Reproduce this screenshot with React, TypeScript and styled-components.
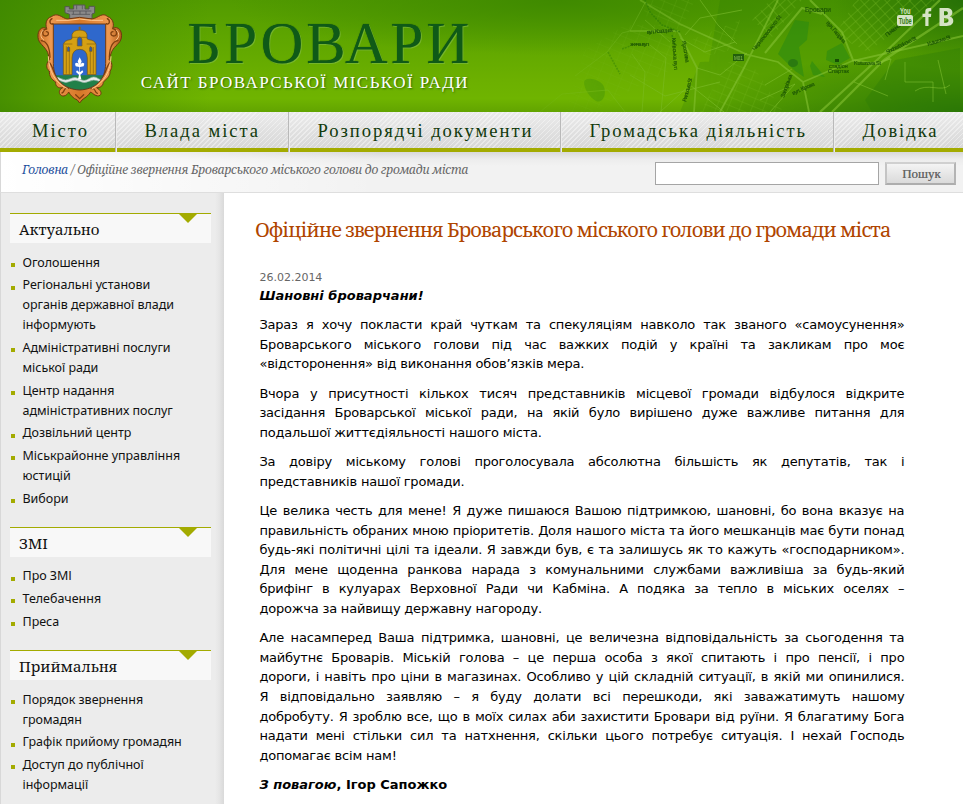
import React from 'react';
import styled, { createGlobalStyle, css } from 'styled-components';

const OLIVE = '#a3ab00';
const SERIF = '"Noto Serif", "DejaVu Serif Condensed", serif';
const TIMES = '"Liberation Serif", "Times New Roman", serif';
const SANS = '"DejaVu Sans", Verdana, sans-serif';

const GlobalStyle = createGlobalStyle`
  * { box-sizing: border-box; }
  body { margin: 0; background: #fff; overflow: hidden; }
  a { color: inherit; text-decoration: none; }
  ul, p, h1, h2 { margin: 0; padding: 0; }
`;

const Page = styled.div`
  width: 963px;
  height: 804px;
  overflow: hidden;
  display: flex;
  flex-direction: column;
`;

const Header = styled.header`
  position: relative;
  flex: 0 0 112px;
  display: flex;
  overflow: hidden;
  background:
    linear-gradient(90deg, rgba(58, 132, 0, 0.75) 0, rgba(58, 132, 0, 0.5) 50px, rgba(58, 132, 0, 0) 210px),
    radial-gradient(ellipse 130px 70px at 963px 0, #246c08 0, rgba(36, 108, 8, 0) 100%),
    radial-gradient(ellipse 260px 60px at 963px 112px, #2b7406 0, rgba(43, 116, 6, 0) 100%),
    radial-gradient(ellipse 330px 55px at 560px 0, #3f8a00 0, rgba(63, 138, 0, 0) 100%),
    linear-gradient(180deg, #529b00 0, #5fa600 35%, #6cb000 72%, #6fb400 88%, #62a400 100%);
`;

const MapArt = styled.svg`
  position: absolute;
  left: 530px;
  top: 0;
`;

const Crest = styled.svg`
  position: relative;
  flex: none;
  margin-left: 30px;
`;

const Brand = styled.div`
  position: relative;
  width: 340px;
  display: flex;
  flex-direction: column;
  align-items: flex-end;
  white-space: nowrap;
  font-family: ${TIMES};
`;

const BrandName = styled.div`
  height: 70px;
  padding-top: 11px;
  font-size: 59px;
  line-height: 65px;
  letter-spacing: 3px;
  margin-right: -2px;
  color: #0f5a17;
  text-shadow: 1px 1px 0 rgba(130, 190, 60, 0.7), 0 0 1px #0b4511;
`;

const BrandLine = styled.div`
  margin: 2px 1px 0 0;
  font-size: 17px;
  line-height: 22px;
  letter-spacing: 1.45px;
  color: #fff;
  text-shadow: 1px 1px 2px #2f6a00;
`;

const Social = styled.svg`
  position: relative;
  flex: none;
  margin: 6px 8px 0 auto;
`;

const Nav = styled.nav`
  flex: 0 0 40px;
  display: grid;
  grid-template-columns: 117px 173px 272px 273px 128px;
`;

const NavLink = styled.a<{ $first?: boolean; $last?: boolean }>`
  padding-left: ${p => (p.$first ? 32 : p.$last ? 27.5 : 27.5)}px;
  white-space: nowrap;
  font: 18.6px/38px ${TIMES};
  letter-spacing: 1.95px;
  color: #123a0c;
  background:
    ${p => (p.$last ? '' : css`linear-gradient(90deg, #b9b9b9 50%, #ececec 50%) right top / 2px 40px no-repeat,`)}
    linear-gradient(${OLIVE}, ${OLIVE}) left bottom / 100% 4px no-repeat,
    repeating-linear-gradient(135deg, rgba(255, 255, 255, 0.4) 0 1px, rgba(255, 255, 255, 0) 1px 3.5px),
    linear-gradient(#ebebeb, #d5d5d5);
`;

const Bar = styled.div`
  flex: 0 0 41px;
  display: flex;
  align-items: flex-start;
  border-left: 1px solid #d8d8d8;
  border-bottom: 1px solid #dedede;
  background:
    linear-gradient(90deg, #fff 0, rgba(255, 255, 255, 0) 380px),
    linear-gradient(#d9d9d9 0, #ececec 7px, #f2f2f2 14px, #f2f2f2 100%);
`;

const Crumbs = styled.div`
  flex: 1;
  padding: 8px 0 0 21px;
  font: italic 12px/20px ${SERIF};
  letter-spacing: -0.2px;
  color: #666;
  white-space: nowrap;
  a { color: #1d4f9c; }
`;

const SearchBox = styled.input`
  width: 224px;
  height: 23px;
  margin: 10px 6px 0 0;
  border: 1px solid #a5a5a5;
  border-radius: 0;
  background: #fff;
  outline: 0;
`;

const SearchButton = styled.button`
  width: 71px;
  height: 23px;
  margin: 10px 7px 0 0;
  padding: 0 0 0 2px;
  border: 2px solid;
  border-color: #d0d0d0 #b4b4b4 #adadad #c4c4c4;
  background: linear-gradient(#f4f4f4, #dadada);
  font: 13px/19px ${TIMES};
  color: #666;
  text-shadow: 0 0 0.6px #777;
`;

const Columns = styled.div`
  flex: 1;
  min-height: 0;
  display: flex;
`;

const Sidebar = styled.aside`
  flex: 0 0 224px;
  padding: 20px 13px 0 9px;
  border-left: 1px solid #d8d8d8;
  background: linear-gradient(90deg, #ececec 214px, #e6e6e6 218px, #d9d9d9 223px);
`;

const Block = styled.section`
  margin-bottom: 18px;
`;

const BlockHead = styled.h2`
  position: relative;
  height: 30px;
  padding-left: 9px;
  border-top: 1px solid ${OLIVE};
  background: #f8f8f8;
  font: 400 15px/31px ${SERIF};
  color: #111;
  &::after {
    content: '';
    position: absolute;
    top: 0;
    right: 14px;
    border: 9px solid transparent;
    border-top-color: ${OLIVE};
    border-bottom: 0;
  }
`;

const Links = styled.ul`
  margin-top: 9.8px;
  list-style: none;
  font: 12.5px/20px "Noto Sans", sans-serif;
  letter-spacing: -0.02px;
  color: #111;
`;

const LinkItem = styled.li`
  display: flex;
  gap: 7.5px;
  margin-bottom: 2.65px;
  white-space: pre-line;
  &::before {
    content: '';
    flex: none;
    width: 4px;
    height: 4px;
    margin: 10.4px 0 0 1px;
    background: ${OLIVE};
  }
`;

const Article = styled.main`
  flex: 1;
  padding: 20px 0 0 31px;
  background: #fff;
  font: 13px/19.53px ${SANS};
  color: #000;
`;

const Title = styled.h1`
  height: 54px;
  font: 400 20px/33px ${SERIF};
  letter-spacing: -0.98px;
  color: #b04500;
  white-space: nowrap;
`;

const Content = styled.div`
  width: 645px;
  margin-left: 4.4px;
`;

const PostDate = styled.div`
  height: 19px;
  font-size: 11px;
  line-height: 21px;
  color: #666;
`;

const Greeting = styled.p`
  font-weight: 700;
  font-style: italic;
`;

const Paragraph = styled.p`
  margin-top: 9.9px;
  letter-spacing: -0.2px;
`;

const Line = styled.span`
  display: block;
  text-align: justify;
  text-align-last: justify;
  white-space: nowrap;
  &:last-child { text-align-last: left; }
`;

const Signature = styled.p`
  margin-top: 9.5px;
  font-weight: 700;
`;

const menu = ['Місто', 'Влада міста', 'Розпорядчі документи', 'Громадська діяльність', 'Довідка'];

const blocks = [
  {
    title: 'Актуально',
    items: [
      'Оголошення',
      'Регіональні установи\nорганів державної влади\nінформують',
      'Адміністративні послуги\nміської ради',
      'Центр надання\nадміністративних послуг',
      'Дозвільний центр',
      'Міськрайонне управління\nюстицій',
      'Вибори',
    ],
  },
  { title: 'ЗМІ', items: ['Про ЗМІ', 'Телебачення', 'Преса'] },
  {
    title: 'Приймальня',
    items: ['Порядок звернення\nгромадян', 'Графік прийому громадян', 'Доступ до публічної\nінформації'],
  },
];

const paragraphs = [
  [
    'Зараз я хочу покласти край чуткам та спекуляціям навколо так званого «самоусунення»',
    'Броварського міського голови під час важких подій у країні та закликам про моє',
    '«відсторонення» від виконання обов’язків мера.',
  ],
  [
    'Вчора у присутності кількох тисяч представників місцевої громади відбулося відкрите',
    'засідання Броварської міської ради, на якій було вирішено дуже важливе питання для',
    'подальшої життєдіяльності нашого міста.',
  ],
  ['За довіру міському голові проголосувала абсолютна більшість як депутатів, так і', 'представників нашої громади.'],
  [
    'Це велика честь для мене! Я дуже пишаюся Вашою підтримкою, шановні, бо вона вказує на',
    'правильність обраних мною пріоритетів. Доля нашого міста та його мешканців має бути понад',
    'будь-які політичні цілі та ідеали. Я завжди був, є та залишусь як то кажуть «господарником».',
    'Для мене щоденна ранкова нарада з комунальними службами важливіша за будь-який',
    'брифінг в кулуарах Верховної Ради чи Кабміна. А подяка за тепло в міських оселях –',
    'дорожча за найвищу державну нагороду.',
  ],
  [
    'Але насамперед Ваша підтримка, шановні, це величезна відповідальність за сьогодення та',
    'майбутнє Броварів. Міській голова – це перша особа з якої спитають і про пенсії, і про',
    'дороги, і навіть про ціни в магазинах. Особливо у цій складній ситуації, в якій ми опинилися.',
    'Я відповідально заявляю – я буду долати всі перешкоди, які заважатимуть нашому',
    'добробуту. Я зроблю все, що в моїх силах аби захистити Бровари від руїни. Я благатиму Бога',
    'надати мені стільки сил та натхнення, скільки цього потребує ситуація. І нехай Господь',
    'допомагає всім нам!',
  ],
];

const CityMap = () => (
  <MapArt width="433" height="112" viewBox="530 0 433 112" fill="none">
    <defs>
      <linearGradient id="fade" x1="560" x2="720" y1="0" y2="0" gradientUnits="userSpaceOnUse">
        <stop offset="0" stopColor="#fff" stopOpacity="0.3" />
        <stop offset="1" stopColor="#fff" />
      </linearGradient>
      <mask id="m"><rect x="530" width="433" height="112" fill="url(#fade)" /></mask>
      <pattern id="grid" width="9" height="7" patternUnits="userSpaceOnUse" patternTransform="rotate(-42)">
        <path d="M0 0H9M0 0V7" stroke="#82c22a" strokeWidth="0.8" />
      </pattern>
      <pattern id="grid2" width="11" height="8" patternUnits="userSpaceOnUse" patternTransform="rotate(22)">
        <path d="M0 0H11M0 0V8" stroke="#82c22a" strokeWidth="0.7" />
      </pattern>
    </defs>
    <g mask="url(#m)">
      <path d="M720 0H963V112H700zM700 62 740 60 724 112H680z" fill="#2f7f05" opacity=".28" />
      <path d="M835 35 856 0h80l-68 52zM752 20l18-20h32l-30 37z" fill="url(#grid)" opacity=".75" />
      <path d="M700 112l28-50 25 4 30 46zM585 50l40-25 50 0 5 40-90 47h-25zM640 0h55l-15 30-32-10zM690 40l50-20-8 30-25 6z" fill="url(#grid2)" opacity=".5" />
      <path d="M778 54 795 20 809 22 807 40 799 47 804 77 795 71zM812 61l13 16-12-2-3-9zM827 51l15-8 8 15-12 7-12-5z" fill="#2c8b10" opacity=".6" />
      <path d="M895 60 960 48v64H872l-7-12z" fill="#2b7b08" opacity=".35" />
      <path d="M584 82c1-6 17-3 20 5s-2 17-8 14-12-12-12-19z" fill="#358908" opacity=".7" />
      <ellipse cx="793" cy="63" rx="5" ry="4" fill="#2b7a10" />
      <g stroke="#85c234" strokeOpacity=".6">
        <path strokeWidth="1.8" d="M720 112 745 66 778 0M745 54 778 62 803 82 809 112M803 82 852 61 963 36M748 55 680 24 640 0M630 31H678L697 68 694 112" />
        <path strokeWidth="2.3" d="M820 112 878 59 940 0M832 112 884 60 963 8" />
        <path strokeWidth="2" d="M810 0 842 32 853 60 878 64 890 58M765 53 802 8 822 14" />
        <path strokeWidth=".9" d="M575 76 607 52 622 33 630 31 646 1M632 54 645 72 642 112M650 45 666 58 661 112M680 38 705 52 735 42M685 35 700 18 742 10M697 68 720 75 747 53M630 75 665 96 720 82M660 112 690 85 724 112M700 0 718 25 737 44M540 112 562 94 608 90 625 112M645 20 670 42M765 85 792 69M760 100 795 84 770 112M868 65 891 59 885 80M854 82 888 96M905 62v20h28v20M938 60l8 34M915 91c13-9 26 2 35-6" />
      </g>
      <path stroke="#277805" strokeWidth="1.6" strokeDasharray="2 1" opacity=".7" d="M608 52 620 74M645 0 650 12 662 25 680 32M672 35 675 45M622 49l8-3" />
    </g>
    <rect x="733" y="54" width="11" height="7" fill="#225f0c" />
    <g fontFamily="Liberation Sans, sans-serif" fontSize="5.5" fill="#174f05" stroke="#174f05" strokeWidth=".15" opacity=".9">
      <text x="805" y="12" fontSize="7" textLength="26" lengthAdjust="spacingAndGlyphs">Бровари</text>
      <text x="734" y="60" fontSize="4.5" fill="#9acb60" stroke="none">M01</text>
      <text x="647" y="34" transform="rotate(-5 647 34)" textLength="26">вул. Козацька</text>
      <text x="630" y="46" textLength="19">зняча вул</text>
      <text x="755" y="51" transform="rotate(-52 755 51)" textLength="43">Черняховського St</text>
      <text x="826" y="23" transform="rotate(50 826 23)" textLength="27">вул. Гагаріна</text>
      <text x="829" y="68">стадіон</text>
      <text x="828" y="73">Спартак</text>
      <text x="854" y="65" textLength="27">Kutuzova St</text>
      <text x="793" y="95" transform="rotate(-24 793 95)" textLength="24">вул. Кірова</text>
      <text x="887" y="54" transform="rotate(-26 887 54)" textLength="33">Shcherbakova St</text>
      <text x="928" y="46" transform="rotate(-18 928 46)" textLength="24">Kutuzova St</text>
      <text x="887" y="37" transform="rotate(-38 887 37)" textLength="23">Пензенська</text>
      <text x="784" y="98" transform="rotate(-70 784 98)" textLength="24">Запорізька</text>
      <text x="682" y="41" transform="rotate(80 682 41)" textLength="22">Ярослава</text>
      <text x="672" y="38" transform="rotate(86 672 38)" textLength="32">Київська вул</text>
      <text x="686" y="102" transform="rotate(-75 686 102)" textLength="24">Рильська St</text>
    </g>
    <path d="M835 59v3h4v-3" fill="#174f05" />
  </MapArt>
);

const CityCrest = () => (
  <Crest width="100" height="112" viewBox="0 0 300 336">
    <defs>
      <linearGradient id="gold" x1="0" x2="1">
        <stop offset="0" stopColor="#c66b20" /><stop offset=".15" stopColor="#ee9950" />
        <stop offset=".5" stopColor="#d67828" /><stop offset=".85" stopColor="#ee9950" /><stop offset="1" stopColor="#b05a18" />
      </linearGradient>
      <clipPath id="shield"><path d="M70 72H227V190C227 240 195 268 149 270C103 268 70 240 70 190Z" /></clipPath>
    </defs>
    <path d="M105 20h13v7h13V15h34v12h12v-8h17v20l-8 3v14H119V43l-14-5z" fill="#8b8a8b" stroke="#55564f" strokeWidth="3" />
    <path d="M112 33h72M125 43h55M140 16v12M157 16v12M130 33v10M150 33v10M168 33v10" stroke="#55555a" strokeWidth="2.5" />
    <path d="M64 50C84 35 96 55 112 57L149 52 186 57C205 54 218 35 233 50C250 55 253 75 248 85C264 77 278 92 274 114C270 132 255 135 245 155L237 178C250 190 246 205 240 214C242 229 227 238 220 247C219 259 209 264 200 263C211 270 217 279 210 286C199 292 189 280 182 276C174 289 163 294 156 300L149 309L142 300C129 295 122 286 116 276C109 290 95 292 89 281C86 272 91 268 98 263C84 266 76 258 77 246C64 238 58 229 58 213C46 205 49 187 59 179L53 157C43 137 25 130 24 112C22 91 35 77 50 86C45 70 49 55 64 50Z" fill="url(#gold)" stroke="#713710" strokeWidth="3" />
    <g fill="none" strokeLinecap="round">
      <path d="M50 87c-15 2-15 20-3 21 10-1 11-13 2-13M248 86c15 3 15 21 3 22-10-1-11-13-2-13M66 56c-12 8-4 20 3 15M232 56c12 8 4 20-3 15M34 122c18 2 25 24 26 50M264 122c-18 2-25 24-26 50M57 187c14 11 11 39 31 49M241 187c-14 11-11 39-31 49M96 279c11-4 2-17 19-14M202 280c-11-4-2-17-19-14M137 284l12 12 12-12" stroke="#80400f" strokeWidth="4" />
      <path d="M80 61h34l35-4 35 4h34M39 91c-10 9-8 22 2 29M260 91c10 9 8 22-2 29M55 170c2 42 19 79 57 96M243 170c-2 42-19 79-57 96" stroke="#ffc88d" strokeWidth="3" />
    </g>
    <g clipPath="url(#shield)">
      <path d="M68 70h162v205H68z" fill="#2f68cc" />
      <path d="M68 226h162v50H68z" fill="#218049" />
      <path d="M66 236q14-8 27 0t28 0 28 1 28-1 28 0 28-3v8q-14 8-28 2t-28 1-28 0-28 0-28-1-28 2z" fill="#e5ecea" stroke="#a5b8b0" strokeWidth="2" />
      <path d="M100 224V133q3-12 21-14l5-3v-12q3-13 23-14 20 1 22 14v12l5 3q19 2 22 14v91h-26v-50q-1-26-23-26t-23 26v50z" fill="#d5a013" stroke="#75540c" strokeWidth="2" />
      <path d="M102 132h25m43 0h27M126 112h45M109 139v82m9-80v82m63-84v82m9-80v80" stroke="#806013" strokeWidth="2" />
      <path d="M142 138v-19q1-8 7-8t7 8v19zM112 154v-11q2-5 7 0v11zM179 154v-11q2-5 7 0v11z" fill="#335caa" stroke="#745d1d" strokeWidth="2" />
      <path d="M149 80v11M145 84h8" stroke="#8a6218" strokeWidth="3" />
      <path d="M149 172l6 12-4 11q5-11 12-4l-2 8-11 2v16l7-6 3 5-9 8 3 14h-10l3-14-9-8 3-5 7 6v-16l-11-2-2-8q8-7 12 4l-4-11z" fill="#fff" />
    </g>
    <path d="M70 72H227V190C227 240 195 268 149 270C103 268 70 240 70 190Z" fill="none" stroke="#6c3a16" strokeWidth="3" />
  </Crest>
);

const SocialIcons = () => (
  <Social width="58" height="22" viewBox="0 0 58 22">
    <g fill="#d5e3c6">
      <rect x="0" y="9" width="16" height="11" rx="2" />
      <path d="M28.3 20v-9h-2.8V7.7h2.8V5.3C28.3 2.9 30 2 32.2 2h2v3.2h-1.5c-1 0-1.2.5-1.2 1.2v1.3h2.8l-.4 3.3h-2.4v9z" />
      <path fillRule="evenodd" d="M42.5 2h6.9c4.1 0 6 1.8 6 4.6 0 2-1 3.3-2.8 3.9 2.3.5 3.7 2 3.7 4.3 0 3.3-2.4 5.2-6.6 5.2h-7.2zm4.5 3.2v4h1.7c1.4 0 2.2-.7 2.2-2 0-1.4-.8-2-2.3-2zm0 7v4.5h2.1c1.6 0 2.4-.8 2.4-2.2 0-1.6-.9-2.3-2.6-2.3z" />
    </g>
    <g fontFamily="Liberation Sans, sans-serif" fontWeight="700" fontSize="8.5">
      <text x="3" y="8" textLength="10.5" lengthAdjust="spacingAndGlyphs" fill="#d5e3c6">You</text>
      <text x="1.7" y="18" textLength="13" lengthAdjust="spacingAndGlyphs" fill="#34780e">Tube</text>
    </g>
  </Social>
);

export default function App() {
  return (
    <Page>
      <GlobalStyle />
      <Header>
        <CityMap />
        <CityCrest />
        <Brand>
          <BrandName>БРОВАРИ</BrandName>
          <BrandLine>САЙТ БРОВАРСЬКОЇ МІСЬКОЇ РАДИ</BrandLine>
        </Brand>
        <SocialIcons />
      </Header>
      <Nav>
        {menu.map((label, i) => (
          <NavLink key={label} href="#" $first={i === 0} $last={i === menu.length - 1}>{label}</NavLink>
        ))}
      </Nav>
      <Bar>
        <Crumbs>
          <a href="#">Головна</a> / Офіційне звернення Броварського міського голови до громади міста
        </Crumbs>
        <SearchBox aria-label="Пошук" />
        <SearchButton>Пошук</SearchButton>
      </Bar>
      <Columns>
        <Sidebar>
          {blocks.map(block => (
            <Block key={block.title}>
              <BlockHead>{block.title}</BlockHead>
              <Links>
                {block.items.map(item => (
                  <LinkItem key={item}><a href="#">{item}</a></LinkItem>
                ))}
              </Links>
            </Block>
          ))}
        </Sidebar>
        <Article>
          <Title>Офіційне звернення Броварського міського голови до громади міста</Title>
          <Content>
            <PostDate>26.02.2014</PostDate>
            <Greeting>Шановні броварчани!</Greeting>
            {paragraphs.map(lines => (
              <Paragraph key={lines[0]}>
                {lines.map(line => <Line key={line}>{line}</Line>)}
              </Paragraph>
            ))}
            <Signature><i>З повагою</i>, Ігор Сапожко</Signature>
          </Content>
        </Article>
      </Columns>
    </Page>
  );
}
